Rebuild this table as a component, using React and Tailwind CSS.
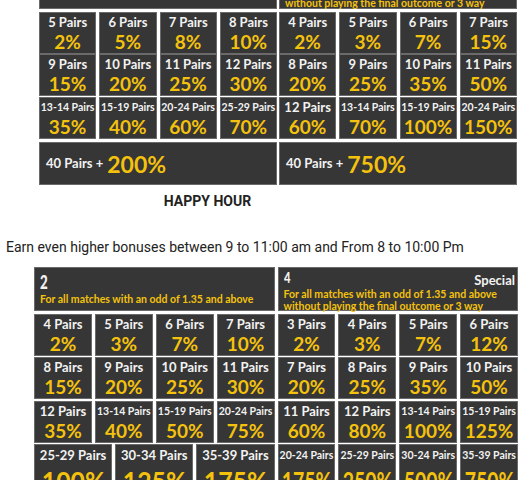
import React from 'react';

const Y = 'text-[#f4c20d]';

const first = {
  left: {
    num: '1',
    lines: ['For all matches with an odd of 1.35 and above'],
    rows: [
      [['5 Pairs', '2%'], ['6 Pairs', '5%'], ['7 Pairs', '8%'], ['8 Pairs', '10%']],
      [['9 Pairs', '15%'], ['10 Pairs', '20%'], ['11 Pairs', '25%'], ['12 Pairs', '30%']],
      [['13-14 Pairs', '35%'], ['15-19 Pairs', '40%'], ['20-24 Pairs', '60%'], ['25-29 Pairs', '70%']],
    ],
    big: '200%',
  },
  right: {
    num: '3',
    special: true,
    lines: ['For all matches with an odd of 1.35 and above', 'without playing the final outcome or 3 way'],
    rows: [
      [['4 Pairs', '2%'], ['5 Pairs', '3%'], ['6 Pairs', '7%'], ['7 Pairs', '15%']],
      [['8 Pairs', '20%'], ['9 Pairs', '25%'], ['10 Pairs', '35%'], ['11 Pairs', '50%']],
      [['12 Pairs', '60%'], ['13-14 Pairs', '70%'], ['15-19 Pairs', '100%'], ['20-24 Pairs', '150%']],
    ],
    big: '750%',
  },
};

const second = {
  left: {
    num: '2',
    lines: ['For all matches with an odd of 1.35 and above'],
    rows: [
      [['4 Pairs', '2%'], ['5 Pairs', '3%'], ['6 Pairs', '7%'], ['7 Pairs', '10%']],
      [['8 Pairs', '15%'], ['9 Pairs', '20%'], ['10 Pairs', '25%'], ['11 Pairs', '30%']],
      [['12 Pairs', '35%'], ['13-14 Pairs', '40%'], ['15-19 Pairs', '50%'], ['20-24 Pairs', '75%']],
    ],
    last: [['25-29 Pairs', '100%'], ['30-34 Pairs', '125%'], ['35-39 Pairs', '175%']],
  },
  right: {
    num: '4',
    special: true,
    lines: ['For all matches with an odd of 1.35 and above', 'without playing the final outcome or 3 way'],
    rows: [
      [['3 Pairs', '2%'], ['4 Pairs', '3%'], ['5 Pairs', '7%'], ['6 Pairs', '12%']],
      [['7 Pairs', '20%'], ['8 Pairs', '25%'], ['9 Pairs', '35%'], ['10 Pairs', '50%']],
      [['11 Pairs', '60%'], ['12 Pairs', '80%'], ['13-14 Pairs', '100%'], ['15-19 Pairs', '125%']],
    ],
    last: [['20-24 Pairs', '175%'], ['25-29 Pairs', '250%'], ['30-24 Pairs', '500%'], ['35-39 Pairs', '750%']],
    smallLast: true,
  },
};

const Header = ({ t, h }) => (
  <div
    className={`${h} bg-[#363636] border border-[#6a6a6a] flex flex-col justify-between pl-[5px] pr-[2px] ${
      t.special ? 'pb-[1px]' : 'pb-[6px] pt-[2px]'
    }`}
  >
    <div className="flex justify-between items-start">
      {t.special ? (
        <span className="inline-block origin-left scale-x-[0.75] text-[15px] leading-[18px] font-black text-[#f2f2f2]">{t.num}</span>
      ) : (
        <span className="inline-block origin-left scale-x-[0.7] text-[19px] leading-[23px] font-black text-[#f2f2f2]">{t.num}</span>
      )}
      {t.special && <span className="text-[13px] leading-[16px] font-bold text-[#f2f2f2] mt-[4px]">Special</span>}
    </div>
    <div className={`text-[10.5px] leading-[12px] font-bold ${Y} whitespace-nowrap`}>
      {t.lines.map((l) => (
        <div key={l}>{l}</div>
      ))}
    </div>
  </div>
);

const Cell = ({ label, value }) => (
  <div className="min-w-0 bg-[#363636] border border-[#6a6a6a] flex flex-col items-center pt-[1px]">
    <span className={`${label.length > 8 ? 'text-[10.5px]' : 'text-[13px]'} leading-[16px] font-bold text-[#f2f2f2] whitespace-nowrap`}>
      {label}
    </span>
    <span className={`text-[19px] leading-[23px] font-bold ${Y}`}>{value}</span>
  </div>
);

const BigCell = ({ label, value, small }) => (
  <div className="flex-1 basis-0 min-w-0 bg-[#363636] border border-[#6a6a6a] flex flex-col items-center pt-[2px]">
    <span className={`${small ? 'text-[10.5px]' : 'text-[13px]'} leading-[17px] font-bold text-[#f2f2f2] whitespace-nowrap`}>
      {label}
    </span>
    <span
      className={`inline-block ${small ? 'scale-x-[0.72]' : 'scale-x-[0.92]'} text-[27px] leading-[33px] font-bold ${Y} whitespace-nowrap`}
    >
      {value}
    </span>
  </div>
);

const Half = ({ t, heights, headH }) => (
  <div className="flex-1 basis-0 min-w-0 flex flex-col gap-[3px]">
    <Header t={t} h={headH} />
    {t.rows.map((row, i) => (
      <div key={i} className={`grid grid-cols-4 gap-[3px] ${heights[i]}`}>
        {row.map(([l, v]) => (
          <Cell key={l} label={l} value={v} />
        ))}
      </div>
    ))}
    {t.big && (
      <div className="h-[43px] bg-[#363636] border border-[#6a6a6a] flex items-center pl-[6px] gap-[4px]">
        <span className="text-[13px] font-bold text-[#f2f2f2]">40 Pairs +</span>
        <span className={`text-[23px] leading-[28px] font-bold ${Y}`}>{t.big}</span>
      </div>
    )}
    {t.last && (
      <div className="flex gap-[3px] h-[56px]">
        {t.last.map(([l, v]) => (
          <BigCell key={l} label={l} value={v} small={t.smallLast} />
        ))}
      </div>
    )}
  </div>
);

export default function App() {
  return (
    <div className="bg-white w-[531px] h-[480px] overflow-hidden font-['Lato',sans-serif]">
      {/* first table, scrolled so only the bottom of its header shows */}
      <div className="ml-[39px] w-[478px] mt-[-36px] flex gap-[2px]">
        <Half t={first.left} headH="h-[45px]" heights={['h-[39px]', 'h-[40px]', 'h-[42px]']} />
        <Half t={first.right} headH="h-[45px]" heights={['h-[39px]', 'h-[40px]', 'h-[42px]']} />
      </div>

      <div className="w-[415px] mt-[6px] text-center font-['Roboto',sans-serif] font-bold text-[14px] leading-[20px] text-[#222]">
        HAPPY HOUR
      </div>
      <p className="mt-[26px] pl-[6px] font-['Roboto',sans-serif] text-[14px] leading-[20px] text-[#222]">
        Earn even higher bonuses between 9 to 11:00 am and From 8 to 10:00 Pm
      </p>

      <div className="ml-[34px] w-[484px] mt-[10px] flex gap-[3px]">
        <Half t={second.left} headH="h-[44px]" heights={['h-[40px]', 'h-[41px]', 'h-[40px]']} />
        <Half t={second.right} headH="h-[44px]" heights={['h-[40px]', 'h-[41px]', 'h-[40px]']} />
      </div>
    </div>
  );
}
